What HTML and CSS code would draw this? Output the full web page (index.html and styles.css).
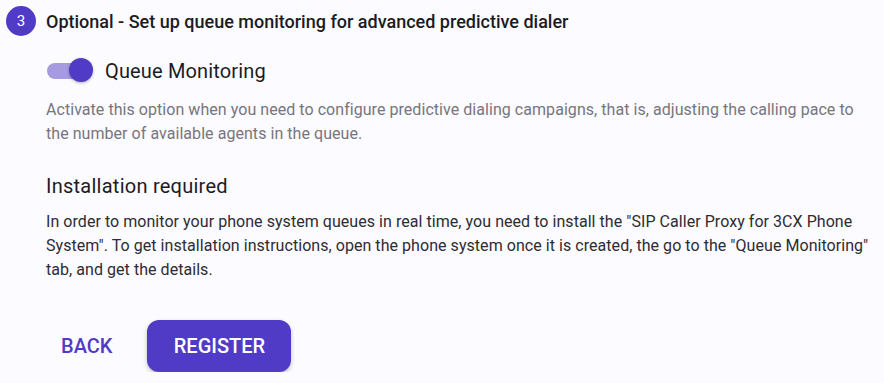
FILE: index.html
```html
<!DOCTYPE html>
<html>
<head>
<meta charset="utf-8">
<link rel="stylesheet" href="styles.css">
</head>
<body>
<div class="step">
  <div class="step-head">
    <div class="step-num">3</div>
    <div class="step-title">Optional - Set up queue monitoring for advanced predictive dialer</div>
  </div>
  <div class="step-body">
    <div class="switch-row">
      <span class="switch"><span class="track"></span><span class="thumb"></span></span>
      <span class="switch-label">Queue Monitoring</span>
    </div>
    <p class="desc">Activate this option when you need to configure predictive dialing campaigns, that is, adjusting the calling pace to the number of available agents in the queue.</p>
    <h2 class="sub">Installation required</h2>
    <p class="text">In order to monitor your phone system queues in real time, you need to install the "SIP Caller Proxy for 3CX Phone System". To get installation instructions, open the phone system once it is created, the go to the "Queue Monitoring" tab, and get the details.</p>
    <div class="actions">
      <button class="btn-text">BACK</button>
      <button class="btn-primary">REGISTER</button>
    </div>
  </div>
</div>
</body>
</html>
```
FILE: styles.css
```css
html, body {
  margin: 0;
  padding: 0;
  background: #fcfbff;
  font-family: Roboto, "Noto Sans", sans-serif;
}
.step {
  padding: 6px 0 0 6px;
}
.step-head {
  display: flex;
  align-items: center;
  gap: 10px;
  height: 30px;
}
.step-num {
  width: 30px;
  height: 30px;
  border-radius: 50%;
  background: #4f3bc6;
  color: #fff;
  font-size: 15px;
  display: flex;
  align-items: center;
  justify-content: center;
}
.step-title {
  font-size: 18px;
  font-weight: 500;
  color: #1c1b22;
}
.step-body {
  padding-left: 40px;
  width: 830px;
}
.switch-row {
  display: flex;
  align-items: center;
  margin-top: 22px;
  height: 26px;
  gap: 13px;
}
.switch {
  position: relative;
  width: 46px;
  height: 26px;
  display: inline-block;
}
.track {
  position: absolute;
  left: 1px;
  top: 5px;
  width: 44px;
  height: 16px;
  border-radius: 8px;
  background: #a69be0;
}
.thumb {
  position: absolute;
  right: -1px;
  top: 0;
  width: 24px;
  height: 24px;
  border-radius: 50%;
  background: #4f3bc6;
  box-shadow: 0 1px 3px rgba(0,0,0,0.3);
}
.switch-label {
  font-size: 20px;
  letter-spacing: 0.15px;
  color: #1c1b22;
}
.desc {
  margin: 14px 0 0;
  font-size: 16px;
  line-height: 24px;
  letter-spacing: 0.05px;
  color: #77757d;
}
.sub {
  margin: 25px 0 0;
  font-size: 20px;
  font-weight: 400;
  line-height: 30px;
  letter-spacing: 0.25px;
  color: #1c1b22;
}
.text {
  margin: 9px 0 0;
  font-size: 16px;
  line-height: 24px;
  letter-spacing: 0.05px;
  color: #2d2c33;
}
.actions {
  display: flex;
  align-items: center;
  margin-top: 38px;
  gap: 20px;
}
.btn-text {
  border: 0;
  background: transparent;
  color: #4f3bc6;
  font-family: inherit;
  font-size: 20px;
  font-weight: 500;
  padding: 0 15px;
  height: 52px;
}
.btn-primary {
  border: 0;
  background: #4f3bc6;
  color: #fff;
  font-family: inherit;
  font-size: 20px;
  font-weight: 500;
  width: 144px;
  height: 52px;
  border-radius: 12px;
  box-shadow: 0 2px 4px rgba(0,0,0,0.25);
}
```
